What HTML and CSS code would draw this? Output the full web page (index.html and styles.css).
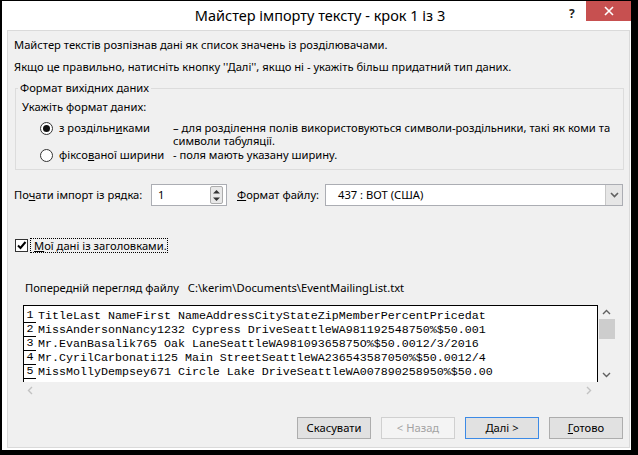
FILE: index.html
```html
<!DOCTYPE html>
<html lang="uk">
  <head>
    <meta charset="utf-8">
    <title>Майстер імпорту тексту</title>
    <link rel="stylesheet" href="styles.css">
  </head>
  <body>
    <div class="window">
      <div class="titlebar">
        <span class="title">Майстер імпорту тексту - крок 1 із 3</span>
        <span class="help">?</span>
        <span class="close">
          <svg width="10" height="10" viewBox="0 0 10 10"><path d="M1 1 L9 9 M9 1 L1 9" stroke="#fff" stroke-width="1.6"/></svg>
        </span>
      </div>

      <div class="panel">
        <p class="intro">Майстер текстів розпізнав дані як список значень із розділювачами.</p>
        <p class="intro second">Якщо це правильно, натисніть кнопку ''Далі'', якщо ні - укажіть більш придатний тип даних.</p>

        <fieldset class="group">
          <legend>Формат вихідних даних</legend>
          <div class="hint">Укажіть формат даних:</div>
          <div class="option">
            <div class="choice"><span class="radio checked"></span>з роздільн<u>и</u>ками</div>
            <div class="desc">– для розділення полів використовуються символи-роздільники, такі як коми та<br>символи табуляції.</div>
          </div>
          <div class="option second-option">
            <div class="choice"><span class="radio"></span>фіксо<u>в</u>аної ширини</div>
            <div class="desc">- поля мають указану ширину.</div>
          </div>
        </fieldset>

        <div class="importRow">
          <span class="rowLabel">По<u>ч</u>ати імпорт із рядка:</span>
          <div class="spin">
            <span class="spinValue">1</span>
            <div class="spinButtons">
              <svg width="9" height="5" viewBox="0 0 9 5"><path d="M1 4.5 L4.5 1 L8 4.5 Z" fill="#333"/></svg>
              <svg width="9" height="5" viewBox="0 0 9 5"><path d="M1 0.5 L4.5 4 L8 0.5 Z" fill="#333"/></svg>
            </div>
          </div>
          <span class="fileLabel"><u>Ф</u>ормат файлу:</span>
          <div class="select">
            <span class="selectValue">437 : ВОТ (США)</span>
            <span class="selectButton">
              <svg width="9" height="6" viewBox="0 0 9 6"><path d="M1 1 L4.5 4.5 L8 1" stroke="#606060" stroke-width="1.6" fill="none"/></svg>
            </span>
          </div>
        </div>

        <div class="headerRow">
          <span class="checkbox">
            <svg width="11" height="11" viewBox="0 0 11 11"><path d="M2 5.5 L4.5 8 L9.5 2" stroke="#000" stroke-width="2" fill="none"/></svg>
          </span>
          <span class="focus"><u>М</u>ої дані із заголовками.</span>
        </div>

        <div class="previewLabel">
          <span>Попередній перегляд файлу</span>
          <span class="path">C:\kerim\Documents\EventMailingList.txt</span>
        </div>

        <div class="preview">
          <div class="previewMain">
            <div class="lines">
              <div class="line"><span class="num">1</span>TitleLast NameFirst NameAddressCityStateZipMemberPercentPricedat</div>
              <div class="line"><span class="num">2</span>MissAndersonNancy1232 Cypress DriveSeattleWA981192548750%$50.001</div>
              <div class="line"><span class="num">3</span>Mr.EvanBasalik765 Oak LaneSeattleWA98109365875O%$50.0012/3/2016</div>
              <div class="line"><span class="num">4</span>Mr.CyrilCarbonati125 Main StreetSeattleWA236543587050%$50.0012/4</div>
              <div class="line"><span class="num">5</span>MissMollyDempsey671 Circle Lake DriveSeattleWA007890258950%$50.00</div>
              <div class="line"><span class="num">&nbsp;</span></div>
            </div>
            <div class="hscroll">
              <svg width="6" height="9" viewBox="0 0 6 9"><path d="M5 1 L1.5 4.5 L5 8" stroke="#c2c2c2" stroke-width="1.4" fill="none"/></svg>
              <svg width="6" height="9" viewBox="0 0 6 9"><path d="M1 1 L4.5 4.5 L1 8" stroke="#c2c2c2" stroke-width="1.4" fill="none"/></svg>
            </div>
          </div>
          <div class="vscroll">
            <svg width="9" height="6" viewBox="0 0 9 6"><path d="M1 5 L4.5 1.5 L8 5" stroke="#606060" stroke-width="1.4" fill="none"/></svg>
            <div class="thumb"></div>
            <div class="track"></div>
            <svg width="9" height="6" viewBox="0 0 9 6"><path d="M1 1 L4.5 4.5 L8 1" stroke="#606060" stroke-width="1.4" fill="none"/></svg>
          </div>
        </div>

        <div class="buttons">
          <button class="btn">Скасувати</button>
          <button class="btn" disabled>&lt; Назад</button>
          <button class="btn default"><u>Д</u>алі &gt;</button>
          <button class="btn"><u>Г</u>отово</button>
        </div>
      </div>
    </div>
  </body>
</html>
```

FILE: styles.css
```css
  html {
    font-family: "Noto Sans", "Open Sans", sans-serif;
  }

  body {
    width: 638px;
    height: 455px;
    margin: 0;
    overflow: hidden;
    background-color: #000;
  }

  .window {
    height: 449px;
    margin: 1px 7px 0 2px;
    display: flex;
    flex-direction: column;
    background-color: #fff;
  }

  .titlebar {
    height: 29px;
    position: relative;
    text-align: center;
  }

  .title {
    font-size: 14.5px;
    line-height: 28px;
    color: #000;
    padding-left: 7px;
  }

  .help {
    position: absolute;
    left: 567px;
    top: 4px;
    font-size: 12px;
    font-weight: bold;
    color: #222;
  }

  .close {
    position: absolute;
    right: 0;
    top: 0;
    width: 45px;
    height: 20px;
    display: flex;
    align-items: center;
    justify-content: center;
    background-color: #c75050;
  }

  .panel {
    flex: 1;
    margin: 0 1px 2px 5px;
    padding: 6px 0 0 6px;
    display: flex;
    flex-direction: column;
    background-color: #f0f0f0;
    border: 1px solid #dadada;
    font-size: 11.2px;
    line-height: 16px;
    color: #000;
  }

  p {
    margin: 0;
  }

  .second {
    margin-top: 6px;
  }

  /* блок формату */
  .group {
    width: 609px;
    margin: 5px 0 0 1px;
    padding: 0 0 7px 2px;
    border: 1px solid #dcdcdc;
    box-sizing: border-box;
  }

  .group legend {
    padding: 0 2px;
  }

  .hint {
    margin: 3px 0 0 4px;
  }

  .option {
    display: flex;
    margin-top: 6px;
  }

  .option.second-option {
    margin-top: 1px;
  }

  .choice {
    width: 133px;
    margin-left: 22px;
    display: flex;
    align-items: flex-start;
    line-height: 13px;
    white-space: nowrap;
  }

  .radio {
    width: 11px;
    height: 11px;
    margin: 1px 6px 0 0;
    flex: none;
    border: 1px solid #333;
    border-radius: 50%;
    background-color: #fff;
    position: relative;
  }

  .radio.checked::after {
    content: "";
    position: absolute;
    left: 2px;
    top: 2px;
    width: 7px;
    height: 7px;
    border-radius: 50%;
    background-color: #111;
  }

  .desc {
    line-height: 13px;
    white-space: nowrap;
  }

  /* рядок імпорту */
  .importRow {
    display: flex;
    align-items: center;
    margin-top: 14px;
  }

  .rowLabel {
    width: 137px;
  }

  .spin {
    width: 76px;
    height: 22px;
    box-sizing: border-box;
    display: flex;
    align-items: center;
    justify-content: space-between;
    padding: 0 3px 0 6px;
    border: 1px solid #abadb3;
    background-color: #fff;
  }

  .spinButtons {
    width: 11px;
    height: 16px;
    display: flex;
    flex-direction: column;
    align-items: center;
    justify-content: space-around;
    border: 1px solid #acacac;
    border-radius: 2px;
    background-color: #e8e8e8;
  }

  .fileLabel {
    width: 88px;
    margin-left: 10px;
  }

  .select {
    width: 298px;
    height: 22px;
    box-sizing: border-box;
    display: flex;
    align-items: center;
    justify-content: space-between;
    border: 1px solid #abadb3;
    background-color: #fff;
  }

  .selectValue {
    padding-left: 12px;
  }

  .selectButton {
    width: 16px;
    height: 20px;
    display: flex;
    align-items: center;
    justify-content: center;
    border-left: 1px solid #c8c8c8;
    background-color: #e6e6e6;
  }

  /* заголовки */
  .headerRow {
    display: flex;
    align-items: center;
    margin: 32px 0 0 1px;
  }

  .checkbox {
    width: 11px;
    height: 11px;
    display: flex;
    align-items: center;
    justify-content: center;
    border: 1px solid #333;
    background-color: #fff;
  }

  .focus {
    margin-left: 2px;
    padding: 0 0 0 3px;
    line-height: 13px;
    border: 1px dotted #000;
  }

  .previewLabel {
    margin: 27px 0 0 11px;
  }

  .path {
    margin-left: 6px;
  }

  /* перегляд файлу */
  .preview {
    display: flex;
    margin: 9px 0 0 9px;
    height: 94px;
  }

  .previewMain {
    width: 575px;
    display: flex;
    flex-direction: column;
  }

  .lines {
    height: 77px;
    overflow: hidden;
    box-sizing: border-box;
    padding-top: 3px;
    border: 1px solid #000;
    border-bottom: none;
    background-color: #fff;
    font-family: "Liberation Mono", monospace;
    font-size: 11.67px;
    line-height: 14px;
  }

  .line {
    white-space: pre;
    height: 14px;
  }

  .num {
    display: inline-block;
    width: 12px;
    height: 13px;
    margin-right: 2px;
    text-align: center;
    border-bottom: 1px solid #000;
    line-height: 13px;
    vertical-align: top;
  }

  .hscroll {
    flex: 1;
    display: flex;
    align-items: center;
    justify-content: space-between;
    padding: 0 6px 0 4px;
  }

  .vscroll {
    width: 17px;
    height: 77px;
    display: flex;
    flex-direction: column;
    align-items: center;
  }

  .vscroll svg {
    margin: 4px 0;
  }

  .thumb {
    width: 16px;
    height: 20px;
    background-color: #cdcdcd;
  }

  .track {
    flex: 1;
  }

  /* кнопки */
  .buttons {
    display: flex;
    justify-content: flex-end;
    gap: 10px;
    margin-top: auto;
    padding: 0 6px 8px 0;
  }

  .btn {
    width: 74px;
    height: 22px;
    padding: 0;
    font-family: inherit;
    font-size: 11.2px;
    line-height: 16px;
    color: #000;
    border: 1px solid #adadad;
    border-radius: 0;
    background-color: #e1e1e1;
  }

  .btn:disabled {
    color: #a3a3a3;
    border-color: #d0d0d0;
    background-color: #f4f4f4;
  }

  .btn.default {
    border-color: #3c8ae6;
  }
```
